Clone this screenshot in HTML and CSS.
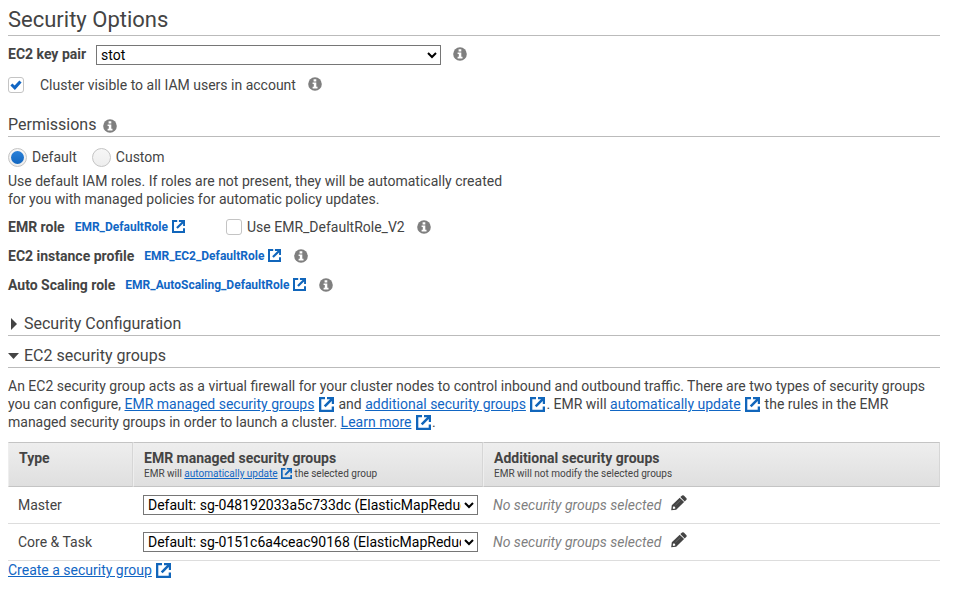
FILE: index.html
```html
<!DOCTYPE html>
<html lang="en">
<head>
<meta charset="utf-8">
<meta name="viewport" content="width=device-width, initial-scale=1">
<title>Security Options</title>
<link rel="stylesheet" href="styles.css">
</head>
<body>
<svg class="sprite" aria-hidden="true">
  <symbol id="info" viewBox="0 0 14 14">
    <circle cx="7" cy="7" r="6.800" fill="#7f7f7f"/>
    <path fill="#fff" d="M5.600 2.200h2.700v2.200H5.600zM4.600 5.400h3.700v4.300h1.200v1.700H4.600V9.700h1.200V7H4.600z"/>
  </symbol>
  <symbol id="external" viewBox="0 0 15 15">
    <path fill="none" stroke="currentColor" stroke-width="2.300" d="M6 1.150H1.150V13.850H13.850V9.500"/>
    <path fill="currentColor" d="M8 0H15V7H12.800V4L6.600 10.200 4.800 8.400 11 2.200H8z"/>
  </symbol>
  <symbol id="pencil" viewBox="0 0 16 16">
    <path fill="#444" fill-rule="evenodd" d="M.2 15.300L.8 10.300 8.700 2.700 13.100 7 5.200 14.700zM2.200 11.600L1.700 13.200 2.500 14 4.200 13.500 4.200 12.300 3.500 11.600z"/>
    <path fill="#444" d="M9.300 2.100L11.100.5Q12 0 12.800.6L15.500 3.200Q16 4 15.400 4.800L13.700 6.400z"/>
    <path stroke="#888" stroke-width=".5" d="M4.300 10.300L9.300 5.500"/>
  </symbol>
</svg>
<main>
  <h1>Security Options</h1>
  <div class="row row-key">
    <label class="name" for="keypair">EC2 key pair</label>
    <select id="keypair" class="key-select"><option>stot</option></select>
    <svg class="info"><use href="#info"/></svg>
  </div>
  <div class="row row-visible">
    <input type="checkbox" id="visible" checked>
    <label for="visible">Cluster visible to all IAM users in account</label>
    <svg class="info"><use href="#info"/></svg>
  </div>

  <h2 class="permissions">Permissions <svg class="info"><use href="#info"/></svg></h2>
  <div class="row row-mode">
    <input type="radio" name="mode" id="default" checked><label for="default">Default</label>
    <input type="radio" name="mode" id="custom"><label for="custom">Custom</label>
  </div>
  <p class="hint">Use default IAM roles. If roles are not present, they will be automatically created for you with managed policies for automatic policy updates.</p>
  <div class="roles">
    <div class="row role">
      <span class="name">EMR role</span>
      <a class="role-link" href="#emr-role">EMR_DefaultRole<svg class="ext"><use href="#external"/></svg></a>
      <span class="v2"><input type="checkbox" id="v2"><label for="v2">Use EMR_DefaultRole_V2</label></span>
      <svg class="info"><use href="#info"/></svg>
    </div>
    <div class="row role">
      <span class="name">EC2 instance profile</span>
      <a class="role-link" href="#ec2-role">EMR_EC2_DefaultRole<svg class="ext"><use href="#external"/></svg></a>
      <svg class="info"><use href="#info"/></svg>
    </div>
    <div class="row role">
      <span class="name">Auto Scaling role</span>
      <a class="role-link" href="#scaling-role">EMR_AutoScaling_DefaultRole<svg class="ext"><use href="#external"/></svg></a>
      <svg class="info"><use href="#info"/></svg>
    </div>
  </div>

  <h2 class="toggle-heading"><button type="button" class="toggle" aria-expanded="false"><svg class="caret" viewBox="0 0 12 12"><path fill="#444" d="M3 0L9 6 3 12z"/></svg>Security Configuration</button></h2>
  <h2 class="toggle-heading"><button type="button" class="toggle" aria-expanded="true"><svg class="caret" viewBox="0 0 12 12"><path fill="#444" d="M0 3H11L5.500 9z"/></svg>EC2 security groups</button></h2>

  <p class="about">An EC2 security group acts as a virtual firewall for your cluster nodes to control inbound and outbound traffic. There are two types of security groups you can configure, <a href="#managed">EMR managed security groups</a> <svg class="ext-lg"><use href="#external"/></svg> and <a href="#additional">additional security groups</a> <svg class="ext-lg"><use href="#external"/></svg>. EMR will <a href="#update">automatically update</a> <svg class="ext-lg"><use href="#external"/></svg> the rules in the EMR managed security groups in order to launch a cluster. <a href="#learn">Learn more</a> <svg class="ext-lg"><use href="#external"/></svg>.</p>

  <table>
    <colgroup><col class="col-type"><col class="col-managed"><col></colgroup>
    <thead>
      <tr>
        <th scope="col">Type</th>
        <th scope="col">EMR managed security groups<small>EMR will <a href="#update">automatically update</a> <svg class="ext-sm"><use href="#external"/></svg> the selected group</small></th>
        <th scope="col">Additional security groups<small>EMR will not modify the selected groups</small></th>
      </tr>
    </thead>
    <tbody>
      <tr>
        <td><label for="master">Master</label></td>
        <td><select id="master"><option>Default: sg-048192033a5c733dc (ElasticMapReduce-master)</option></select></td>
        <td><div class="selected"><em>No security groups selected</em><button type="button" class="edit" aria-label="Edit"><svg><use href="#pencil"/></svg></button></div></td>
      </tr>
      <tr>
        <td><label for="core">Core &amp; Task</label></td>
        <td><select id="core"><option>Default: sg-0151c6a4ceac90168 (ElasticMapReduce-slave)</option></select></td>
        <td><div class="selected"><em>No security groups selected</em><button type="button" class="edit" aria-label="Edit"><svg><use href="#pencil"/></svg></button></div></td>
      </tr>
    </tbody>
  </table>
  <a href="#create">Create a security group</a> <svg class="ext-lg"><use href="#external"/></svg>
</main>
</body>
</html>
```

FILE: styles.css
```css
* {
  box-sizing: border-box;
}

body {
  margin: 0;
  padding: 4px 14px 0 8px;
  background: #fff;
  color: #444;
  font: 14px/18px Roboto, sans-serif;
}

.sprite {
  position: absolute;
  width: 0;
  height: 0;
}

h1,
h2 {
  margin: 0;
  border-bottom: 1px solid #bbb;
  font-weight: 400;
}

h1 {
  height: 32px;
  font-size: 22px;
  line-height: 32px;
}

h2 {
  font-size: 16px;
  line-height: 20px;
}

p {
  margin: 0;
}

a {
  color: #1166c4;
}

.row {
  display: flex;
  align-items: center;
}

.name {
  font-weight: 700;
}

.info {
  flex: none;
  width: 14px;
  height: 14px;
}

select {
  display: block;
  width: 100%;
  height: 20px;
  margin: 0;
  padding: 0;
  border: 1px solid #767676;
  border-radius: 0;
  background-color: #fff;
  color: #000;
  font: 14px Roboto, sans-serif;
}

.row-key {
  gap: 12px;
  height: 37px;
  padding-top: 1px;
}

.row-key .name,
.row-key .info,
.row-visible .info {
  margin-bottom: 2px;
}

.key-select {
  width: 345px;
  margin-left: -2px;
}

.row-visible {
  height: 24px;
}

.row-visible label {
  margin: 0 12px 0 16px;
}

input {
  flex: none;
  appearance: none;
  margin: 0;
}

input[type="checkbox"] {
  width: 16px;
  height: 16px;
  border: 1px solid #c4c4c4;
  border-radius: 3px;
  background: #fff;
}

input[type="checkbox"]:checked::before {
  content: "";
  display: block;
  width: 14px;
  height: 14px;
  background: #1166c4;
  clip-path: polygon(10% 54%, 24% 40%, 40% 54%, 74% 18%, 90% 32%, 42% 86%);
}

input[type="radio"] {
  width: 19px;
  height: 19px;
  padding: 2px;
  border: 1px solid #c4c4c4;
  border-radius: 50%;
  background: linear-gradient(#f6f6f6, #eee);
}

input[type="radio"]:checked::before {
  content: "";
  display: block;
  width: 13px;
  height: 13px;
  border-radius: 50%;
  background: linear-gradient(#2a80d8, #1166c0);
}

.permissions {
  display: flex;
  align-items: center;
  gap: 7px;
  margin-top: 18px;
  padding-bottom: 1px;
}

.permissions .info {
  margin-top: 2px;
}

.row-mode {
  height: 35px;
  padding-top: 5px;
}

.row-mode label {
  margin: 0 15px 0 5px;
}

.hint {
  max-width: 500px;
}

.roles {
  margin-top: 4px;
}

.role {
  height: 29px;
}

.role-link {
  display: flex;
  align-items: center;
  gap: 4px;
  margin: 0 12px 0 10px;
  font-size: 12px;
  font-weight: 700;
  text-decoration: none;
}

.ext,
.ext-lg,
.ext-sm {
  color: #1166bb;
}

.ext {
  width: 13px;
  height: 13px;
  margin-right: 1px;
}

.v2 {
  display: flex;
  align-items: center;
  gap: 5px;
  margin: 0 12px 0 28px;
}

.toggle-heading {
  height: 32px;
}

.roles + .toggle-heading {
  margin-top: 5px;
}

.toggle {
  display: flex;
  align-items: center;
  gap: 4px;
  height: 31px;
  padding: 9px 0 0;
  border: 0;
  background: none;
  color: inherit;
  font: inherit;
}

.caret {
  width: 12px;
  height: 12px;
}

.about {
  margin: 9px 0 11px;
}

.ext-lg {
  width: 15px;
  height: 15px;
  margin: 0 1px;
  vertical-align: -3px;
}

table {
  width: 100%;
  border-collapse: separate;
  border-spacing: 0;
  table-layout: fixed;
}

.col-type {
  width: 125px;
}

.col-managed {
  width: 350px;
}

th {
  height: 45px;
  padding: 6px 10px 4px;
  border-top: 1px solid #c4c4c4;
  border-bottom: 1px solid #c4c4c4;
  border-right: 1px solid #d6d6d6;
  border-left: 1px solid #eee;
  background: linear-gradient(#eee, #dfdfdf);
  text-align: left;
  vertical-align: top;
}

small {
  display: block;
  font-size: 10px;
  font-weight: 400;
  line-height: 14px;
}

.ext-sm {
  width: 11px;
  height: 11px;
  margin-left: 1px;
  vertical-align: -2px;
}

td {
  height: 37px;
  padding: 0 5px 0 10px;
  border-bottom: 1px solid #ddd;
}

.selected {
  display: flex;
  align-items: center;
  gap: 10px;
}

em {
  color: #7f7f7f;
}

.edit {
  padding: 0 0 4px;
  border: 0;
  background: none;
}

.edit svg {
  display: block;
  width: 16px;
  height: 16px;
}
```
